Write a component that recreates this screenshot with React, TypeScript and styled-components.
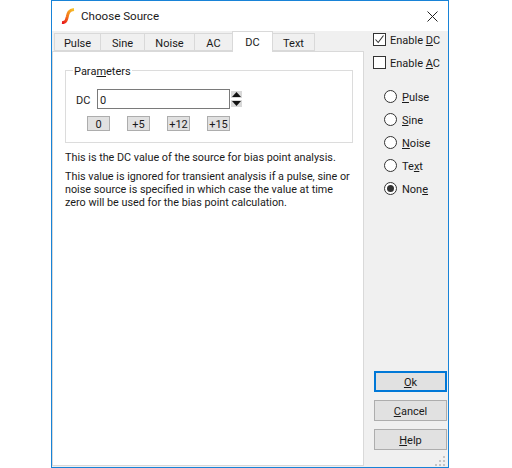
import React from 'react';
import styled, { createGlobalStyle } from 'styled-components';

const GlobalStyle = createGlobalStyle`
  html, body {
    margin: 0;
    padding: 0;
    background: #fff;
  }
  * {
    box-sizing: border-box;
  }
`;

const Dialog = styled.div`
  margin-left: 51px;
  width: 398px;
  height: 468px;
  display: flex;
  flex-direction: column;
  background: #f0f0f0;
  border: 1px solid #1883d7;
  font-family: Roboto, Lato, sans-serif;
  font-size: 11px;
  color: #1a1a1a;
  position: relative;
`;

const TitleBar = styled.div`
  height: 30px;
  flex: none;
  display: flex;
  align-items: center;
  background: #fff;
  padding: 0 10px 0 9px;
  gap: 6px;
`;

const Title = styled.span`
  flex: 1;
  font-size: 11.6px;
`;

const Body = styled.div`
  flex: 1;
  display: flex;
  min-height: 0;
`;

const TabArea = styled.div`
  width: 312px;
  margin-bottom: 1px;
  display: flex;
  flex-direction: column;
`;

const TabStrip = styled.div`
  height: 20px;
  flex: none;
  display: flex;
  align-items: flex-end;
  padding-left: 2px;
  position: relative;
  z-index: 1;
`;

const Tab = styled.div<{ $width: number; $active?: boolean }>`
  width: ${p => p.$width}px;
  height: ${p => (p.$active ? 21 : 18)}px;
  margin-bottom: ${p => (p.$active ? -1 : 0)}px;
  padding-top: ${p => (p.$active ? 1 : 2)}px;
  display: flex;
  align-items: center;
  justify-content: center;
  background: ${p => (p.$active ? '#fff' : '#f0f0f0')};
  border: 1px solid #d9d9d9;
  border-bottom: ${p => (p.$active ? 'none' : '1px solid #d9d9d9')};
  margin-right: -1px;
`;

const TabPanel = styled.div`
  flex: 1;
  background: #fff;
  border: 1px solid #d9d9d9;
  padding: 18px 12px 0 12px;
`;

const Group = styled.fieldset`
  margin: 0 0 8px;
  width: 288px;
  height: 73px;
  border: 1px solid #dcdcdc;
  padding: 0;
  position: relative;
`;

const Legend = styled.span`
  position: absolute;
  left: 7px;
  top: -6px;
  background: #fff;
  padding: 0 1px;
  line-height: 14px;
`;

const GroupBody = styled.div`
  padding: 18px 0 0 10px;
  display: flex;
  flex-direction: column;
  gap: 7px;
`;

const InputRow = styled.div`
  display: flex;
  align-items: center;
  height: 20px;
`;

const InputLabel = styled.span`
  width: 21px;
  padding-top: 2px;
`;

const ValueBox = styled.div`
  width: 133px;
  height: 20px;
  border: 1px solid #7a7a7a;
  background: #fff;
  display: flex;
  align-items: center;
  padding: 2px 0 0 2px;
`;

const Spinner = styled.div`
  margin-left: 1px;
  display: flex;
  flex-direction: column;
  gap: 2px;
`;

const SpinButton = styled.div`
  width: 11px;
  height: 7px;
  background: #d8d8d8;
  display: flex;
  align-items: center;
  justify-content: center;
`;

const PresetRow = styled.div`
  display: flex;
  gap: 17px;
  padding-left: 11px;
`;

const Preset = styled.div`
  width: 23px;
  height: 15px;
  background: #e1e1e1;
  border: 1px solid #adadad;
  padding-top: 1px;
  display: flex;
  align-items: center;
  justify-content: center;
`;

const Paragraph = styled.p`
  margin: 0 0 6px;
  font-size: 10.8px;
  line-height: 13px;
  white-space: nowrap;
`;

const SidePanel = styled.div`
  flex: 1;
  display: flex;
  flex-direction: column;
  padding: 2px 1px 17px 9px;
`;

const CheckRow = styled.label`
  display: flex;
  align-items: center;
  gap: 4px;
  height: 13px;
  margin-bottom: 10px;
`;

const CheckBox = styled.span`
  width: 13px;
  height: 13px;
  flex: none;
  border: 1px solid #333;
  background: #fff;
  display: flex;
  align-items: center;
  justify-content: center;
`;

const Caption = styled.span`
  padding-top: 2px;
`;

const RadioList = styled.div`
  margin: 11px 0 0 11px;
  display: flex;
  flex-direction: column;
  gap: 10px;
`;

const RadioRow = styled.label`
  display: flex;
  align-items: center;
  gap: 5px;
  height: 13px;
`;

const RadioDot = styled.span<{ $checked?: boolean }>`
  width: 13px;
  height: 13px;
  flex: none;
  border-radius: 50%;
  border: 1px solid #333;
  background: #fff;
  display: flex;
  align-items: center;
  justify-content: center;
  &::after {
    content: '';
    display: ${p => (p.$checked ? 'block' : 'none')};
    width: 7px;
    height: 7px;
    border-radius: 50%;
    background: #333;
  }
`;

const ButtonStack = styled.div`
  margin: auto 0 0 1px;
  display: flex;
  flex-direction: column;
  gap: 8px;
`;

const ActionButton = styled.div<{ $default?: boolean }>`
  width: 73px;
  height: 21px;
  background: #e1e1e1;
  border: ${p => (p.$default ? '2px solid #0078d7' : '1px solid #adadad')};
  display: flex;
  align-items: center;
  justify-content: center;
`;

const Grip = styled.svg`
  position: absolute;
  right: 1px;
  bottom: 1px;
`;

const Logo = () => (
  <svg width="14" height="16" viewBox="0 0 14 16">
    <defs>
      <linearGradient id="logoFill" x1="0" y1="1" x2="1" y2="0">
        <stop offset="0" stopColor="#e8141c" />
        <stop offset="0.5" stopColor="#f47a1a" />
        <stop offset="1" stopColor="#f6c52a" />
      </linearGradient>
    </defs>
    <path
      d="M1 14.5 C5 15 5.5 12 6.2 9 C7 5 8 2 13 1.5"
      fill="none"
      stroke="url(#logoFill)"
      strokeWidth="3"
    />
  </svg>
);

const CloseIcon = () => (
  <svg width="11" height="11" viewBox="0 0 11 11">
    <path d="M0.5 0.5 L10.5 10.5 M10.5 0.5 L0.5 10.5" stroke="#222" strokeWidth="1" />
  </svg>
);

const Arrow = ({ up }: { up?: boolean }) => (
  <svg width="9" height="5" viewBox="0 0 9 5">
    <path d={up ? 'M4.5 0 L9 5 H0 Z' : 'M0 0 H9 L4.5 5 Z'} fill="#111" />
  </svg>
);

const tabs = [
  { label: 'Pulse', width: 47 },
  { label: 'Sine', width: 45 },
  { label: 'Noise', width: 51 },
  { label: 'AC', width: 39 },
  { label: 'DC', width: 41, active: true },
  { label: 'Text', width: 43 },
];

const presets = ['0', '+5', '+12', '+15'];

export default function App() {
  return (
    <>
      <GlobalStyle />
      <Dialog>
        <TitleBar>
          <Logo />
          <Title>Choose Source</Title>
          <CloseIcon />
        </TitleBar>
        <Body>
          <TabArea>
            <TabStrip>
              {tabs.map(t => (
                <Tab key={t.label} $width={t.width} $active={t.active}>
                  {t.label}
                </Tab>
              ))}
            </TabStrip>
            <TabPanel>
              <Group>
                <Legend>Para<u>m</u>eters</Legend>
                <GroupBody>
                  <InputRow>
                    <InputLabel>DC</InputLabel>
                    <ValueBox>0</ValueBox>
                    <Spinner>
                      <SpinButton><Arrow up /></SpinButton>
                      <SpinButton><Arrow /></SpinButton>
                    </Spinner>
                  </InputRow>
                  <PresetRow>
                    {presets.map(p => (
                      <Preset key={p}>{p}</Preset>
                    ))}
                  </PresetRow>
                </GroupBody>
              </Group>
              <Paragraph>This is the DC value of the source for bias point analysis.</Paragraph>
              <Paragraph>
                This value is ignored for transient analysis if a pulse, sine or<br />
                noise source is specified in which case the value at time<br />
                zero will be used for the bias point calculation.
              </Paragraph>
            </TabPanel>
          </TabArea>
          <SidePanel>
            <CheckRow>
              <CheckBox>
                <svg width="11" height="11" viewBox="0 0 11 11">
                  <path d="M1.5 5.5 L4.2 8.5 L9.5 1.5" fill="none" stroke="#333" strokeWidth="1.1" />
                </svg>
              </CheckBox>
              <Caption>Enable <u>D</u>C</Caption>
            </CheckRow>
            <CheckRow>
              <CheckBox />
              <Caption>Enable <u>A</u>C</Caption>
            </CheckRow>
            <RadioList>
              <RadioRow><RadioDot /><Caption><u>P</u>ulse</Caption></RadioRow>
              <RadioRow><RadioDot /><Caption><u>S</u>ine</Caption></RadioRow>
              <RadioRow><RadioDot /><Caption><u>N</u>oise</Caption></RadioRow>
              <RadioRow><RadioDot /><Caption>Te<u>x</u>t</Caption></RadioRow>
              <RadioRow><RadioDot $checked /><Caption>Non<u>e</u></Caption></RadioRow>
            </RadioList>
            <ButtonStack>
              <ActionButton $default><Caption><u>O</u>k</Caption></ActionButton>
              <ActionButton><Caption><u>C</u>ancel</Caption></ActionButton>
              <ActionButton><Caption><u>H</u>elp</Caption></ActionButton>
            </ButtonStack>
          </SidePanel>
        </Body>
        <Grip width="12" height="12" viewBox="0 0 12 12">
          <path d="M8 2h2v2H8z M4 6h2v2H4z M8 6h2v2H8z M0 10h2v2H0z M4 10h2v2H4z M8 10h2v2H8z" fill="#c4c4c4" />
        </Grip>
      </Dialog>
    </>
  );
}
